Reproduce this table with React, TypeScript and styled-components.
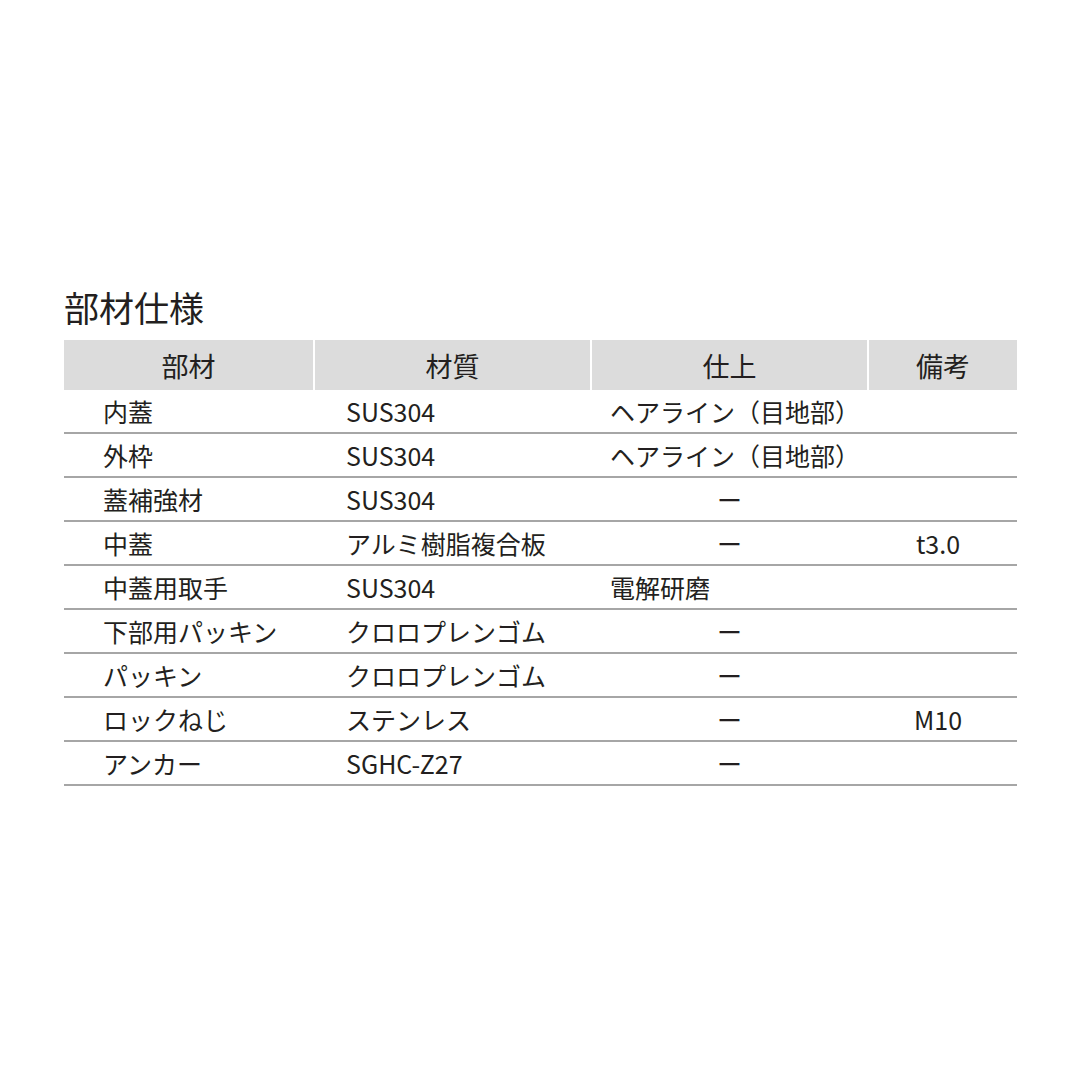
import React from 'react';
import styled, { createGlobalStyle } from 'styled-components';

const GlobalStyle = createGlobalStyle`
  body {
    margin: 0;
    background: #ffffff;
    font-family: "Noto Sans CJK JP", "Noto Sans", sans-serif;
    color: #231f20;
  }
`;

const StyledPage = styled.div`
  width: 1080px;
  height: 1080px;
  padding: 282px 0 0 64px;
  box-sizing: border-box;
`;

const StyledTitle = styled.h2`
  margin: 0 0 8px 0;
  font-size: 35px;
  font-weight: 400;
  line-height: 50px;
`;

const COLUMNS = '249px 275px 275px 148px';

const StyledHeader = styled.div`
  display: grid;
  grid-template-columns: ${COLUMNS};
  column-gap: 2px;
  width: 953px;
`;

const StyledHeaderCell = styled.div`
  background-color: #dcdcdc;
  height: 50px;
  display: flex;
  align-items: center;
  justify-content: center;
  font-size: 27px;
`;

const StyledRow = styled.div`
  display: grid;
  grid-template-columns: ${COLUMNS};
  column-gap: 2px;
  width: 953px;
  height: 44px;
  box-sizing: border-box;
  border-bottom: 2px solid #a6a6a6;
`;

const StyledCell = styled.div<{ $pad: number; $center?: boolean; $shift?: number }>`
  display: flex;
  align-items: center;
  justify-content: ${(p) => (p.$center ? 'center' : 'flex-start')};
  padding-left: ${(p) => (p.$center ? 0 : p.$pad)}px;
  padding-right: ${(p) => p.$shift ?? 0}px;
  font-size: 25px;
  white-space: nowrap;
`;

type Row = [string, string, string, string];

const rows: Row[] = [
  ['内蓋', 'SUS304', 'ヘアライン（目地部）', ''],
  ['外枠', 'SUS304', 'ヘアライン（目地部）', ''],
  ['蓋補強材', 'SUS304', 'ー', ''],
  ['中蓋', 'アルミ樹脂複合板', 'ー', 't3.0'],
  ['中蓋用取手', 'SUS304', '電解研磨', ''],
  ['下部用パッキン', 'クロロプレンゴム', 'ー', ''],
  ['パッキン', 'クロロプレンゴム', 'ー', ''],
  ['ロックねじ', 'ステンレス', 'ー', 'M10'],
  ['アンカー', 'SGHC-Z27', 'ー', ''],
];

const App = () => {
  return (
    <>
      <GlobalStyle />
      <StyledPage>
        <StyledTitle>部材仕様</StyledTitle>
        <StyledHeader>
          <StyledHeaderCell>部材</StyledHeaderCell>
          <StyledHeaderCell>材質</StyledHeaderCell>
          <StyledHeaderCell>仕上</StyledHeaderCell>
          <StyledHeaderCell>備考</StyledHeaderCell>
        </StyledHeader>
        {rows.map((r, i) => (
          <StyledRow key={i}>
            <StyledCell $pad={39}>{r[0]}</StyledCell>
            <StyledCell $pad={31}>{r[1]}</StyledCell>
            <StyledCell $pad={18} $center={r[2] === 'ー'}>
              {r[2]}
            </StyledCell>
            <StyledCell $pad={0} $center $shift={10}>
              {r[3]}
            </StyledCell>
          </StyledRow>
        ))}
      </StyledPage>
    </>
  );
};

export default App;
